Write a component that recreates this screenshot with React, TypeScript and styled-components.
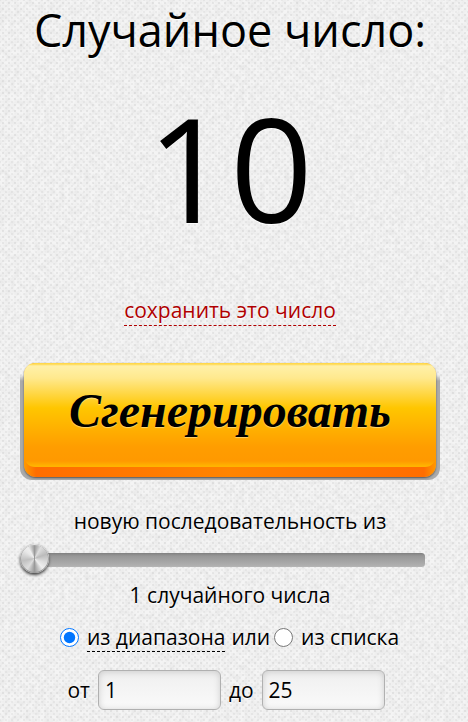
import React, { useState } from "react";
import styled, { createGlobalStyle } from "styled-components";

const grain = encodeURIComponent(
  `<svg xmlns="http://www.w3.org/2000/svg" width="200" height="200"><filter id="n"><feTurbulence type="fractalNoise" baseFrequency="0.2" numOctaves="3" stitchTiles="stitch"/><feColorMatrix values="0 0 0 0 0  0 0 0 0 0  0 0 0 0 0  0.09 0 0 0 -0.03"/></filter><rect width="200" height="200" filter="url(#n)"/></svg>`
);

const GlobalStyle = createGlobalStyle`
  * { box-sizing: border-box; }
  body {
    margin: 0;
    min-height: 100vh;
    color: #000;
    font: 400 21px/32px "Open Sans", sans-serif;
    text-shadow: 0 1px 1px #fff;
    background-color: #f4f4f4;
    background-image:
      url("data:image/svg+xml,${grain}"),
      radial-gradient(circle, rgba(0, 0, 0, 0.06) 0 1px, transparent 1px),
      radial-gradient(circle, rgba(0, 0, 0, 0.04) 0 1px, transparent 1px);
    background-size: 200px 200px, 6px 6px, 6px 6px;
    background-position: 0 0, 0 0, 3px 3px;
  }
`;

const Page = styled.main`
  display: flex;
  flex-direction: column;
  align-items: center;
  padding: 0 28px 12px 20px;
`;

const Title = styled.h1`
  margin: 0;
  font-size: 45px;
  line-height: 60px;
  font-weight: 400;
  white-space: nowrap;
`;

const Result = styled.output`
  font-size: 145px;
  line-height: 214px;
`;

const SaveLink = styled.a`
  margin-top: 22px;
  line-height: 29px;
  color: #b00000;
  text-decoration: none;
  border-bottom: 1px dashed #b00000;
`;

const ButtonBase = styled.div`
  align-self: stretch;
  margin-top: 37px;
  padding: 0 4px 3px;
  border-radius: 12px;
  background: linear-gradient(transparent 12px, #aaa 18px);
`;

const GenerateButton = styled.button`
  display: block;
  width: 100%;
  height: 114px;
  padding: 0;
  border: 0;
  border-radius: 12px;
  background: linear-gradient(90deg, #ff9a00, #ff6d00 12px, #ff8400 50%, #ff6d00 calc(100% - 12px), #ff9a00);
  box-shadow: 0 1px 2px #555;
  cursor: pointer;
`;

const ButtonFace = styled.span`
  display: block;
  height: 104px;
  margin-bottom: 10px;
  padding-top: 18px;
  border-radius: 11px;
  font: italic bold 48px/60px "Liberation Serif", serif;
  color: #000;
  text-shadow: 0 1px 1px rgba(255, 240, 180, 0.6);
  background: linear-gradient(#ffd84c 0 1px, #fff0a8 3px, #ffe98e 15px, #ffc600 45px, #ff9d00 84px, #ff9900 98px, #ffb400 103px);
`;

const Caption = styled.label`
  margin-top: 25px;
`;

const Slider = styled.input`
  appearance: none;
  align-self: stretch;
  height: 30px;
  margin: 8px 15px 0 0;
  background: transparent;
  cursor: pointer;

  &::-webkit-slider-runnable-track {
    height: 14px;
    border-radius: 8px 4px 4px 8px;
    background: linear-gradient(#808080, #979797 3px, #b0b0b0 13px, #b8b8b8);
  }

  &::-webkit-slider-thumb {
    appearance: none;
    width: 29px;
    height: 29px;
    margin-top: -9px;
    border-radius: 50%;
    background: conic-gradient(#999, #ddd 30deg, #bbb 70deg, #ddd 110deg, #eee 140deg, #999 180deg, #ddd 215deg, #c0c0c0 260deg, #e8e8e8 310deg, #eee 330deg, #999);
    box-shadow: inset 0 1px 1px #eee, inset 0 0 0 1px #999, 0 2px 3px #444;
  }
`;

const Count = styled.output`
  margin-top: 4px;
`;

const Sources = styled.div`
  display: flex;
  align-items: center;
  margin-top: 10px;
  margin-right: 5px;
  white-space: nowrap;
`;

const Radio = styled.input`
  width: 19px;
  height: 19px;
  margin: 0 8px 0 4px;
`;

const SourceLabel = styled.label<{ $active: boolean }>`
  line-height: 28px;
  border-bottom: 1px dashed ${(p) => (p.$active ? "#000" : "transparent")};
  cursor: pointer;
`;

const Or = styled.span`
  margin-left: 6px;
`;

const Range = styled.div`
  display: flex;
  align-items: center;
  gap: 8px;
  margin-top: 17px;
  margin-right: 8px;
`;

const NumberBox = styled.input`
  width: 123px;
  height: 40px;
  padding: 0 6px;
  border: 1px solid #b0b0b0;
  border-radius: 6px;
  background: linear-gradient(#efefef, #fafafa);
  box-shadow: inset 0 1px 6px #ccc;
  font: inherit;
  color: inherit;
`;

export default function App() {
  const [result, setResult] = useState(10);
  const [count, setCount] = useState(1);
  const [source, setSource] = useState("range");
  const [min, setMin] = useState("1");
  const [max, setMax] = useState("25");

  const generate = () => {
    const low = Number(min);
    const high = Number(max);
    setResult(low + Math.floor(Math.random() * (high - low + 1)));
  };

  return (
    <>
      <GlobalStyle />
      <Page>
        <Title>Случайное число:</Title>
        <Result>{result}</Result>
        <SaveLink href="#save">сохранить это число</SaveLink>
        <ButtonBase>
          <GenerateButton type="button" onClick={generate}>
            <ButtonFace>Сгенерировать</ButtonFace>
          </GenerateButton>
        </ButtonBase>
        <Caption htmlFor="count">новую последовательность из</Caption>
        <Slider id="count" type="range" min={1} max={20} value={count} onChange={(e) => setCount(Number(e.target.value))} />
        <Count htmlFor="count">{count} {count === 1 ? "случайного числа" : "случайных чисел"}</Count>
        <Sources>
          <Radio type="radio" id="from-range" name="source" checked={source === "range"} onChange={() => setSource("range")} />
          <SourceLabel htmlFor="from-range" $active={source === "range"}>из диапазона</SourceLabel>
          <Or>или</Or>
          <Radio type="radio" id="from-list" name="source" checked={source === "list"} onChange={() => setSource("list")} />
          <SourceLabel htmlFor="from-list" $active={source === "list"}>из списка</SourceLabel>
        </Sources>
        <Range>
          <label htmlFor="min">от</label>
          <NumberBox id="min" inputMode="numeric" value={min} onChange={(e) => setMin(e.target.value)} />
          <label htmlFor="max">до</label>
          <NumberBox id="max" inputMode="numeric" value={max} onChange={(e) => setMax(e.target.value)} />
        </Range>
      </Page>
    </>
  );
}
